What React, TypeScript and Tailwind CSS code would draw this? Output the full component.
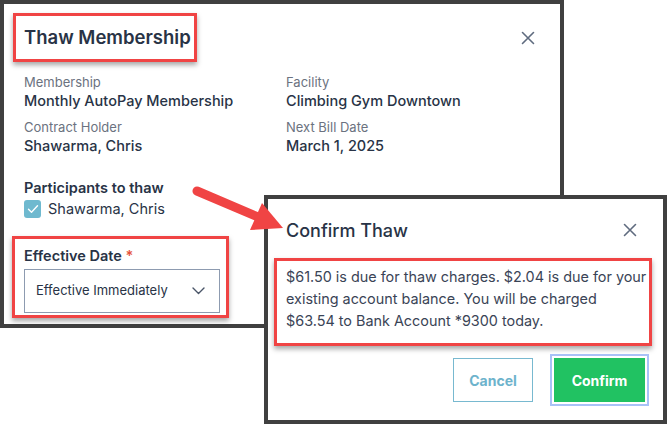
import React from "react";

const RED = "border-[#f04444]";

function XIcon() {
  return (
    <svg width="14" height="14" viewBox="0 0 14 14" fill="none">
      <path d="M1.5 1.5 L12.5 12.5 M12.5 1.5 L1.5 12.5" stroke="#5f6b7f" strokeWidth="1.6" strokeLinecap="round" />
    </svg>
  );
}

function Field({ label, value }: { label: string; value: string }) {
  return (
    <div className="flex flex-col">
      <div className="text-[13px] leading-[18px] text-[#6b7280]">{label}</div>
      <div className="text-[14.5px] leading-[20px] font-medium text-[#283346]">{value}</div>
    </div>
  );
}

export default function App() {
  return (
    <div
      className="relative w-[667px] h-[424px] bg-white overflow-hidden"
      style={{ fontFamily: "Inter, 'Open Sans', sans-serif" }}
    >
      {/* First dialog */}
      <div className="w-[564px] h-[328px] border-4 border-[#404040] bg-white pt-[9px] px-5 flex flex-col">
        <div className="flex items-center justify-between">
          <div
            className={`-ml-[11px] w-[184px] h-[49px] border-[3px] ${RED} flex items-center pl-2 shadow-[0_3px_5px_rgba(0,0,0,0.35)]`}
          >
            <span className="text-[18.5px] font-semibold text-[#283346] whitespace-nowrap">Thaw Membership</span>
          </div>
          <div className="w-6 h-6 flex items-center justify-center">
            <XIcon />
          </div>
        </div>

        <div className="mt-[11px] grid grid-cols-[262px_1fr] gap-y-[7px]">
          <Field label="Membership" value="Monthly AutoPay Membership" />
          <Field label="Facility" value="Climbing Gym Downtown" />
          <Field label="Contract Holder" value="Shawarma, Chris" />
          <Field label="Next Bill Date" value="March 1, 2025" />
        </div>

        <div className="mt-[22px] text-[14.5px] leading-[19px] font-semibold text-[#283346]">Participants to thaw</div>
        <div className="mt-[3px] h-[18px] flex items-center">
          <div className="w-[17px] h-[18px] rounded-[3px] bg-[#6fb9cf] flex items-center justify-center">
            <svg width="12" height="10" viewBox="0 0 12 10" fill="none">
              <path d="M1.5 5.2 L4.5 8.2 L10.5 1.8" stroke="white" strokeWidth="1.4" strokeLinecap="round" strokeLinejoin="round" />
            </svg>
          </div>
          <span className="ml-[7px] text-[14.5px] text-[#283346]">Shawarma, Chris</span>
        </div>

        <div
          className={`mt-[18px] -ml-[12px] w-[217px] border-[3px] ${RED} pl-[9px] pt-[7px] pb-[2px] shadow-[0_3px_5px_rgba(0,0,0,0.35)]`}
        >
          <div className="text-[14.5px] leading-[19px] font-semibold text-[#283346]">
            Effective Date <span className="text-[#e5533b]">*</span>
          </div>
          <div className="mt-[4px] h-[44px] w-[196px] border border-[#8d9bb0] flex items-center justify-between pl-[11px] pr-[14px]">
            <span className="text-[13px] text-[#283346]">Effective Immediately</span>
            <svg width="13" height="8" viewBox="0 0 13 8" fill="none">
              <path d="M1 1 L6.5 6.5 L12 1" stroke="#4a5568" strokeWidth="1.4" strokeLinecap="round" strokeLinejoin="round" />
            </svg>
          </div>
        </div>
      </div>

      {/* Second dialog */}
      <div className="absolute left-[264px] top-[195px] w-[403px] h-[229px] border-4 border-[#404040] bg-white pt-[17px] pl-[18px] flex flex-col">
        <div className="flex items-center justify-between h-[28px] pr-[26px]">
          <span className="text-[18px] font-medium text-[#283346]">Confirm Thaw</span>
          <XIcon />
        </div>
        <div
          className={`mt-[14px] -ml-[12px] w-[378px] h-[88px] border-[3px] ${RED} pl-[9px] pt-[5px] shadow-[0_3px_5px_rgba(0,0,0,0.35)]`}
        >
          <p className="text-[14.4px] leading-[22px] text-[#3a4456] whitespace-nowrap">
            $61.50 is due for thaw charges. $2.04 is due for your
            <br />
            existing account balance. You will be charged
            <br />
            $63.54 to Bank Account *9300 today.
          </p>
        </div>
        <div className="mt-[12px] flex justify-end pr-[18px] gap-[21px]">
          <button className="w-[80px] h-[44px] border border-[#78b9d0] text-[#6db3cc] font-bold text-[14px]">
            Cancel
          </button>
          <button className="w-[91px] h-[44px] bg-[#21c262] text-white font-bold text-[14px] ring-2 ring-[#a8c2f7] ring-offset-2">
            Confirm
          </button>
        </div>
      </div>

      {/* Arrow */}
      <svg className="absolute left-0 top-0" width="667" height="424" viewBox="0 0 667 424" fill="none">
        <line x1="197" y1="191" x2="258" y2="217" stroke="#f04444" strokeWidth="9" strokeLinecap="round" />
        <polygon points="283,228 262,203 250,230" fill="#f04444" />
      </svg>
    </div>
  );
}
